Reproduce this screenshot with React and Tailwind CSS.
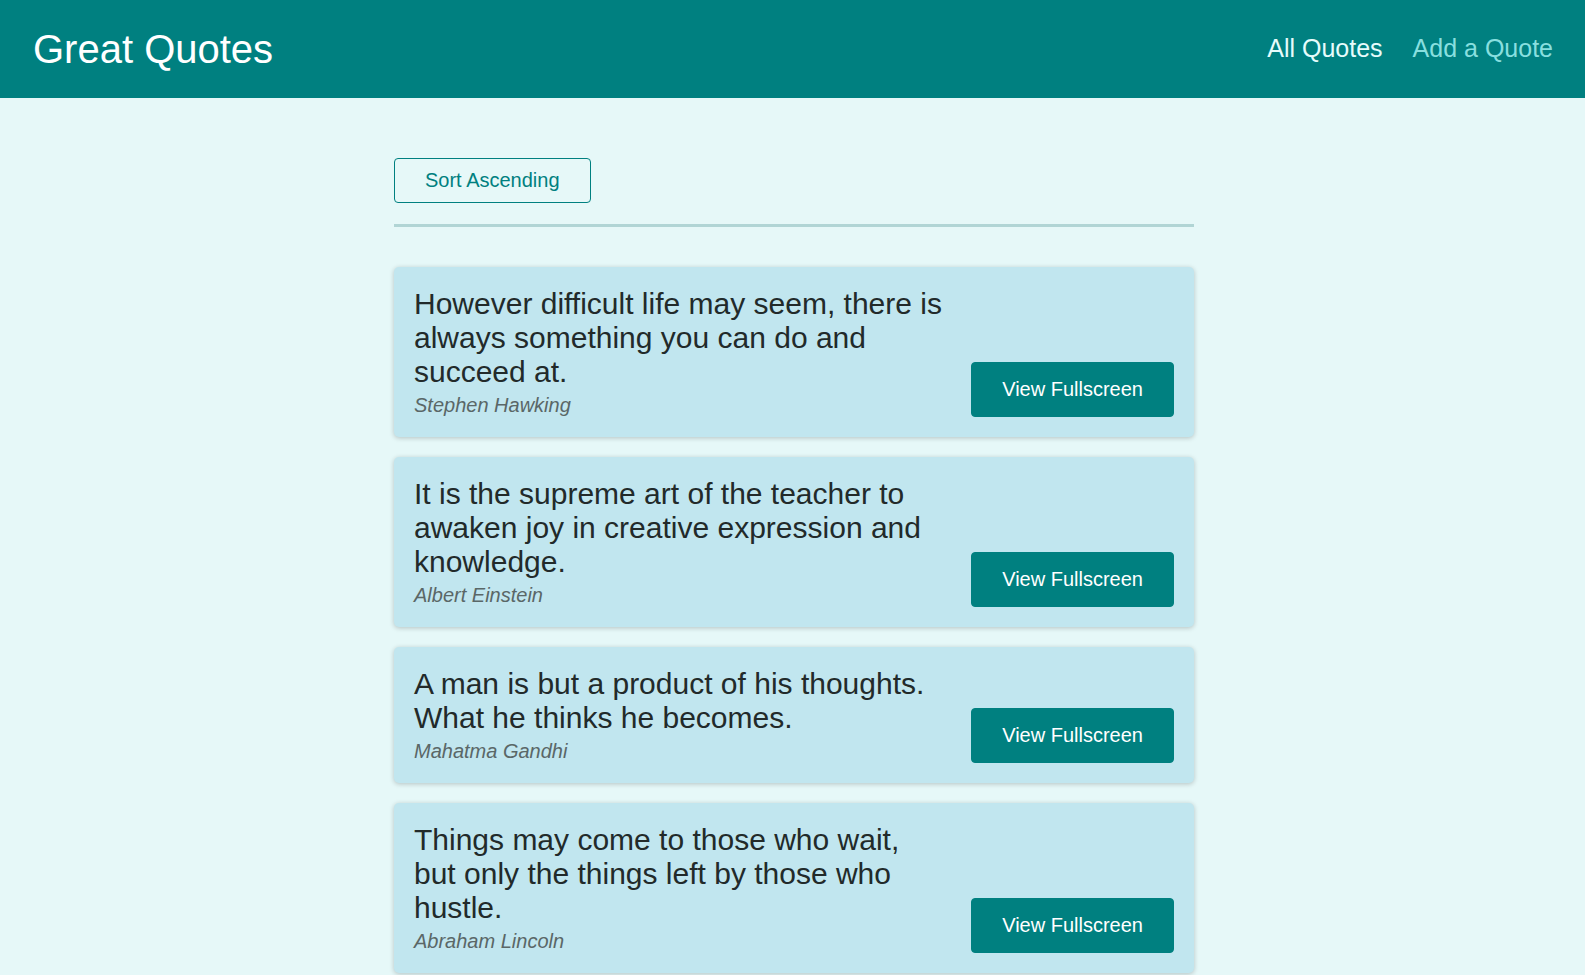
import React from 'react';

const quotes = [
  {
    id: 'q1',
    text: 'However difficult life may seem, there is always something you can do and succeed at.',
    author: 'Stephen Hawking',
  },
  {
    id: 'q2',
    text: 'It is the supreme art of the teacher to awaken joy in creative expression and knowledge.',
    author: 'Albert Einstein',
  },
  {
    id: 'q3',
    text: 'A man is but a product of his thoughts. What he thinks he becomes.',
    author: 'Mahatma Gandhi',
  },
  {
    id: 'q4',
    text: 'Things may come to those who wait, but only the things left by those who hustle.',
    author: 'Abraham Lincoln',
  },
];

const QuoteItem = ({ text, author }) => {
  return (
    <li className="flex items-end justify-between rounded-[5px] bg-[#c1e6ef] p-5 shadow-[0_1px_5px_rgba(0,0,0,0.22)]">
      <figure className="mr-[25px] flex-1">
        <blockquote>
          <p className="text-[30px] text-[#222a2a]">{text}</p>
        </blockquote>
        <figcaption className="mt-[5px] text-[20px] italic text-[#5a6767]">
          {author}
        </figcaption>
      </figure>
      <button className="rounded-[4px] border border-[#008080] bg-[#008080] px-[30px] py-[15px] text-[20px] text-white">
        View Fullscreen
      </button>
    </li>
  );
};

const App = () => {
  return (
    <div className="min-h-screen bg-[#e6f8f8] font-['Liberation_Sans',Arial,sans-serif] leading-[normal]">
      {/* Header */}
      <header className="flex h-[98px] items-center justify-between bg-[#008080] pl-[33px] pr-[32px]">
        <div className="text-[40px] text-white">Great Quotes</div>
        <nav className="mb-[2px]">
          <ul className="flex gap-[30px] text-[25px]">
            <li>
              <a className="text-[#e6fcfc]">All Quotes</a>
            </li>
            <li>
              <a className="text-[#88dfdf]">Add a Quote</a>
            </li>
          </ul>
        </nav>
      </header>

      {/* Quote list */}
      <main className="flex justify-center pl-[3px] pt-[60px]">
        <div className="w-[800px]">
          <div className="mb-10 border-b-[3px] border-[#b1d5d5] pb-[21px]">
            <button className="rounded-[4px] border border-[#008080] bg-transparent px-[30px] py-[10px] text-[20px] text-[#008080]">
              Sort Ascending
            </button>
          </div>
          <ul className="flex flex-col gap-5 pb-5">
            {quotes.map((q) => (
              <QuoteItem key={q.id} text={q.text} author={q.author} />
            ))}
          </ul>
        </div>
      </main>
    </div>
  );
};

export default App;
